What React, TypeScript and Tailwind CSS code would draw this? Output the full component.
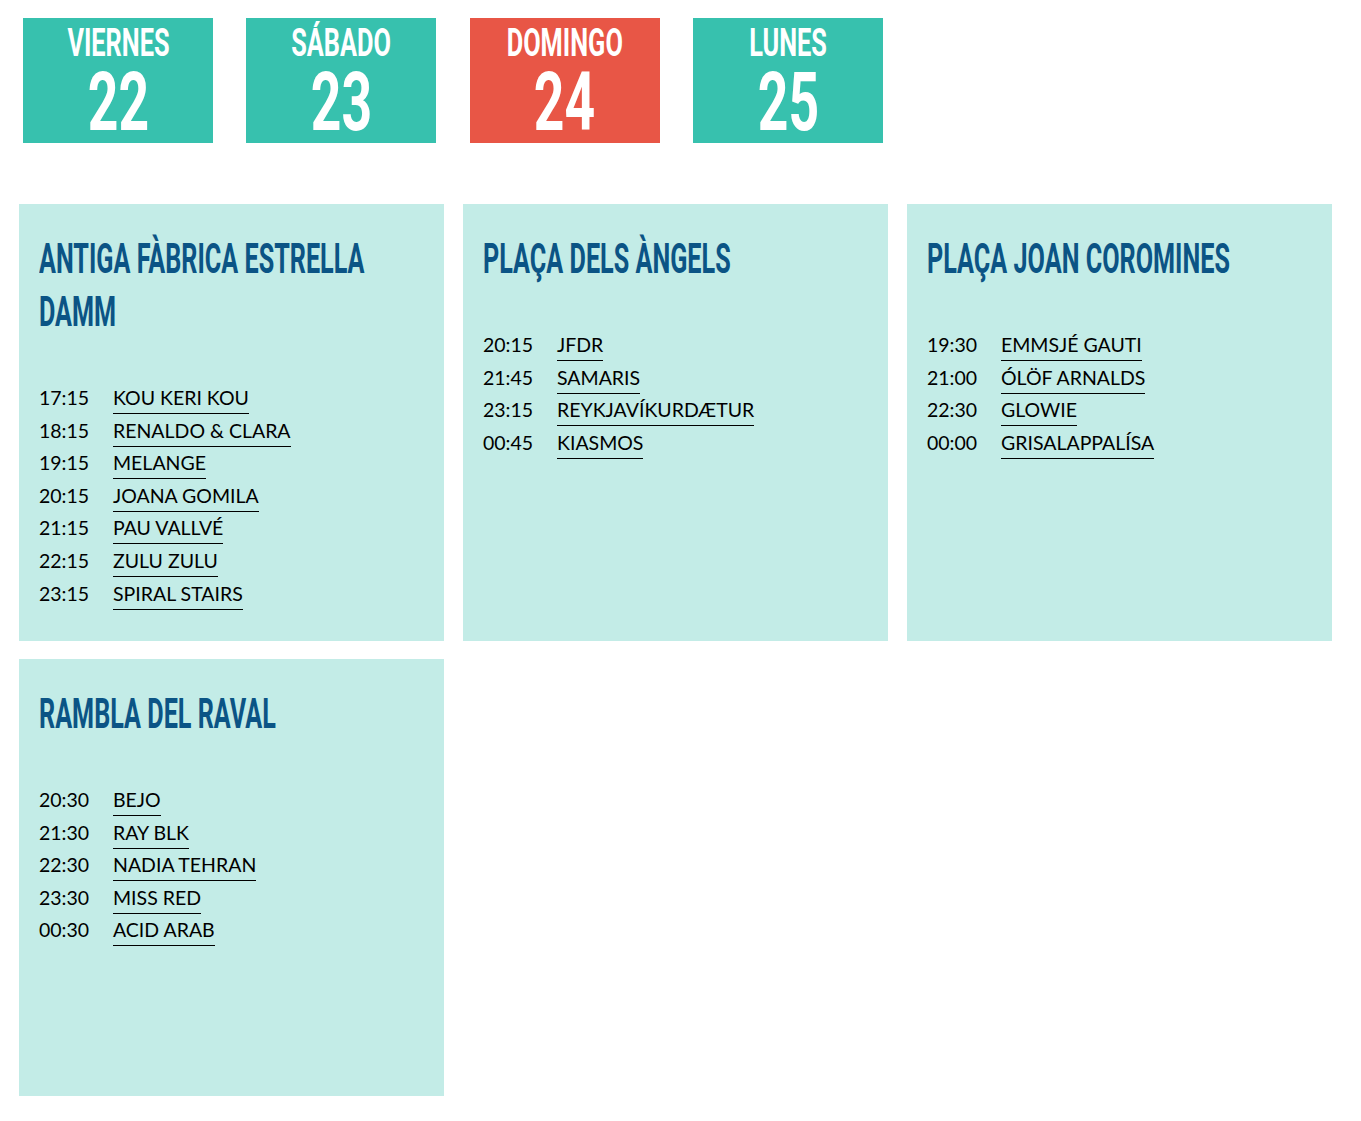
import React from "react";

type Slot = { time: string; name: string };
type Stage = { lines: string[]; slots: Slot[] };

const days = [
  { day: "VIERNES", num: "22", active: false },
  { day: "SÁBADO", num: "23", active: false },
  { day: "DOMINGO", num: "24", active: true },
  { day: "LUNES", num: "25", active: false },
];

const stages: Stage[] = [
  {
    lines: ["ANTIGA FÀBRICA ESTRELLA", "DAMM"],
    slots: [
      { time: "17:15", name: "KOU KERI KOU" },
      { time: "18:15", name: "RENALDO & CLARA" },
      { time: "19:15", name: "MELANGE" },
      { time: "20:15", name: "JOANA GOMILA" },
      { time: "21:15", name: "PAU VALLVÉ" },
      { time: "22:15", name: "ZULU ZULU" },
      { time: "23:15", name: "SPIRAL STAIRS" },
    ],
  },
  {
    lines: ["PLAÇA DELS ÀNGELS"],
    slots: [
      { time: "20:15", name: "JFDR" },
      { time: "21:45", name: "SAMARIS" },
      { time: "23:15", name: "REYKJAVÍKURDÆTUR" },
      { time: "00:45", name: "KIASMOS" },
    ],
  },
  {
    lines: ["PLAÇA JOAN COROMINES"],
    slots: [
      { time: "19:30", name: "EMMSJÉ GAUTI" },
      { time: "21:00", name: "ÓLÖF ARNALDS" },
      { time: "22:30", name: "GLOWIE" },
      { time: "00:00", name: "GRISALAPPALÍSA" },
    ],
  },
  {
    lines: ["RAMBLA DEL RAVAL"],
    slots: [
      { time: "20:30", name: "BEJO" },
      { time: "21:30", name: "RAY BLK" },
      { time: "22:30", name: "NADIA TEHRAN" },
      { time: "23:30", name: "MISS RED" },
      { time: "00:30", name: "ACID ARAB" },
    ],
  },
];

// no Bebas available: stretch Roboto bold into a tall condensed shape
const display = "font-['Roboto',sans-serif] font-bold";

const App: React.FC = () => {
  return (
    <div className="min-h-screen bg-white font-['Lato',sans-serif] text-black">
      {/* day tabs */}
      <div className="flex gap-[33.4px] pl-[23px] pt-[18px]">
        {days.map((d) => (
          <div
            key={d.day}
            className={`flex h-[125px] w-[190px] flex-col items-center text-white ${
              d.active ? "bg-[#e85646]" : "bg-[#37c1ae]"
            }`}
          >
            <div className={`${display} mt-[4px] whitespace-nowrap text-[30px] leading-[42px]`}>
              <span className="inline-block scale-x-[0.845] scale-y-[1.3]">{d.day}</span>
            </div>
            <div className={`${display} whitespace-nowrap text-[60px] leading-[78px]`}>
              <span className="inline-block scale-x-[0.891] scale-y-[1.35]">{d.num}</span>
            </div>
          </div>
        ))}
      </div>

      {/* stages */}
      <div className="mt-[61px] grid grid-cols-[425px_425px_425px] gap-x-[19px] gap-y-[18px] pl-[19px]">
        {stages.map((s) => (
          <div key={s.lines[0]} className="h-[437px] bg-[#c3ece7] px-[20px] pt-[28px]">
            <h2 className={`${display} text-[42px] leading-[53px] text-[#0b5485]`}>
              {s.lines.map((l) => (
                <span key={l} className="block origin-left scale-x-[0.6] whitespace-nowrap">
                  {l}
                </span>
              ))}
            </h2>
            <ul className="mt-[52px]">
              {s.slots.map((sl) => (
                <li
                  key={sl.time + sl.name}
                  className="flex h-[32.6px] items-start text-[19.5px] leading-[16px]"
                >
                  <span className="w-[74px]">{sl.time}</span>
                  <span className="border-b border-black pb-[7px]">{sl.name}</span>
                </li>
              ))}
            </ul>
          </div>
        ))}
      </div>
    </div>
  );
};

export default App;
